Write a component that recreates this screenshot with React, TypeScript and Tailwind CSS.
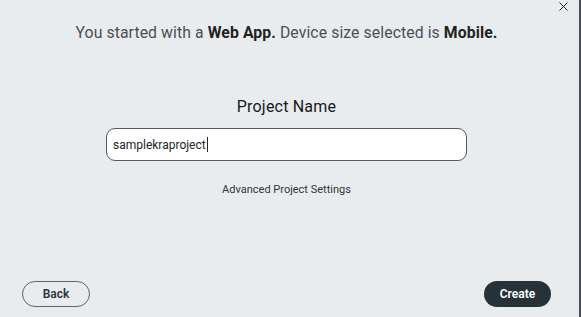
import { X } from 'lucide-react';

export default function App() {
  return (
    <div
      className="flex h-[317px] w-[581px] bg-[#e9ecef] text-[#212529]"
      style={{ fontFamily: 'Roboto, "Liberation Sans", sans-serif' }}
    >
      {/* Dialog body */}
      <div className="relative flex w-[573px] flex-col">
        <button className="absolute right-[2px] top-[-1px] text-[#222]">
          <X size={15} strokeWidth={1.6} />
        </button>

        <p className="mt-[22px] text-center text-[15.75px] leading-[22px] tracking-[0.1px] text-[#4a4f54]">
          You started with a <span className="font-bold text-[#222]">Web App.</span> Device size selected is{' '}
          <span className="font-bold text-[#222]">Mobile.</span>
        </p>

        <h2 className="mt-[52px] text-center text-[16px] leading-[22px] tracking-[0.2px] text-[#15191c]">Project Name</h2>

        <div className="mt-[10px] flex justify-center">
          <div className="flex h-[33px] w-[361px] items-center rounded-[9px] border border-[#505a64] bg-white px-[6px] text-[12px] text-[#212529]">
            samplekraproject
            <span className="ml-[1px] h-[15px] w-px bg-[#212529]" />
          </div>
        </div>

        <p className="mt-[21px] text-center text-[11px] text-[#2f353b]">Advanced Project Settings</p>

        <div className="mt-auto mb-[10px] flex items-center justify-between px-[22px]">
          <button className="h-[26px] w-[68px] rounded-full border-[1.5px] border-[#5c646c] text-[12px] font-semibold text-[#2b343d]">
            Back
          </button>
          <button className="h-[26px] w-[67px] rounded-full bg-[#263238] text-[12px] font-semibold text-white">
            Create
          </button>
        </div>
      </div>
      <div className="w-[6px]" />
      <div className="w-[2px] bg-[#4b4f54]" />
    </div>
  );
}
